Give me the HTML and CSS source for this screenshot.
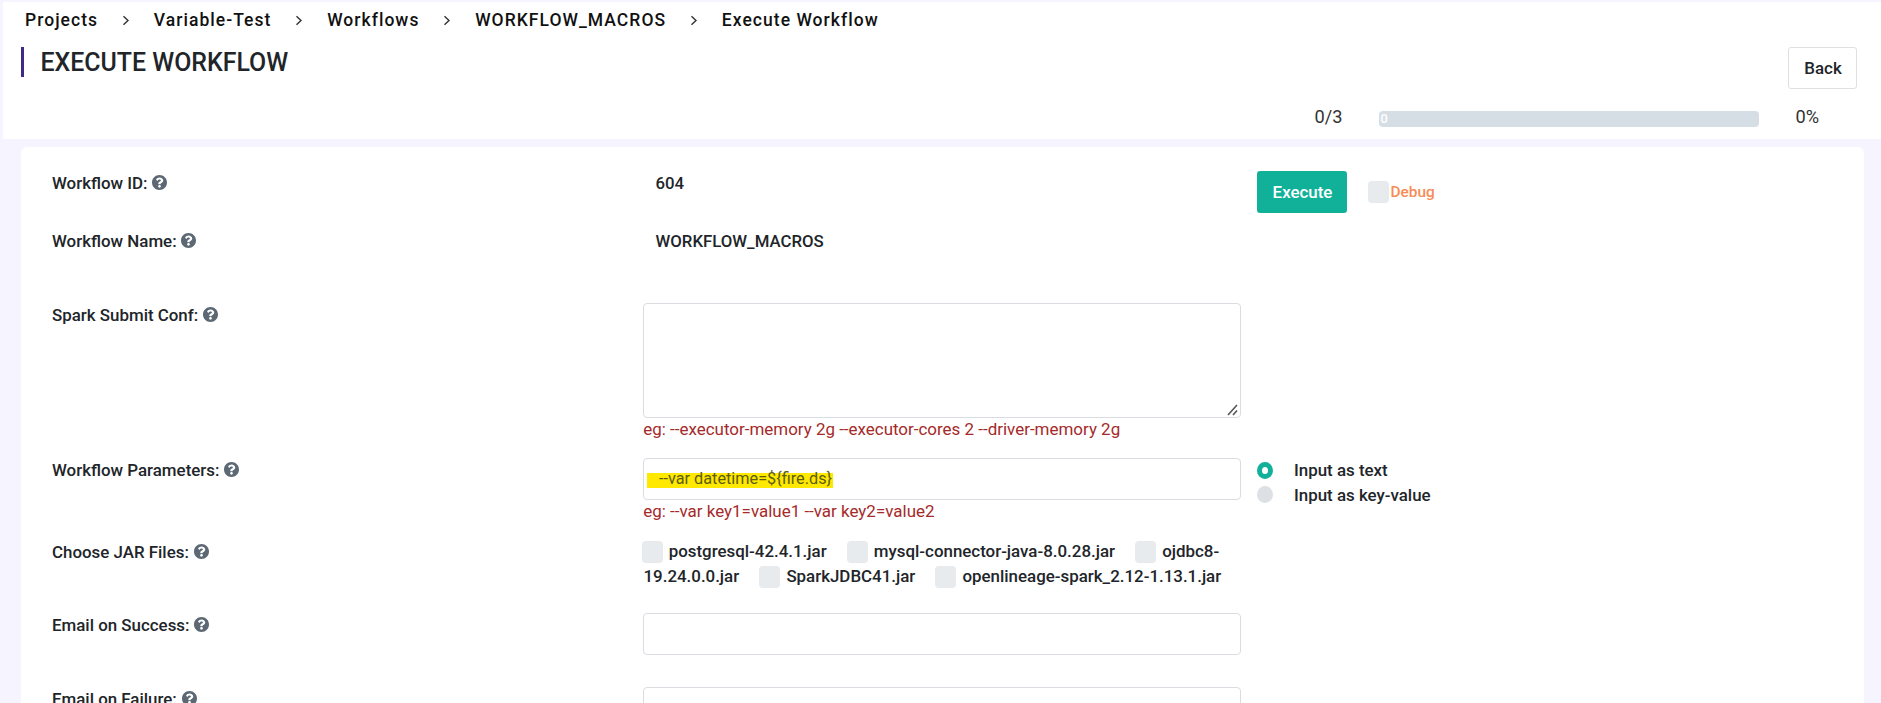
FILE: index.html
```html
<!DOCTYPE html>
<html lang="en">
<head>
<meta charset="utf-8">
<title>Execute Workflow</title>
<link rel="stylesheet" href="styles.css">
</head>
<body>
<svg class="sprite" aria-hidden="true">
  <symbol id="help" viewBox="8 8 496 496"><path d="M504 256c0 136.997-111.043 248-248 248S8 392.997 8 256C8 119.083 119.043 8 256 8s248 111.083 248 248zM262.655 90c-54.497 0-89.255 22.957-116.549 63.758-3.536 5.286-2.353 12.415 2.715 16.258l34.699 26.31c5.205 3.947 12.621 3.008 16.665-2.122 17.864-22.658 30.113-35.797 57.303-35.797 20.429 0 45.698 13.148 45.698 32.958 0 14.976-12.363 22.667-32.534 33.976C247.128 238.528 216 254.941 216 296v4c0 6.627 5.373 12 12 12h56c6.627 0 12-5.373 12-12v-1.333c0-28.462 83.186-29.647 83.186-106.667 0-58.002-60.165-102-116.531-102zM256 338c-25.365 0-46 20.635-46 46 0 25.364 20.635 46 46 46s46-20.636 46-46c0-25.365-20.635-46-46-46z"/></symbol>
  <symbol id="chevron" viewBox="0 0 8 11"><path d="M1.5 1.2 6 5.5 1.5 9.8" fill="none" stroke="#333" stroke-width="1.4"/></symbol>
</svg>
<header class="header">
  <nav class="breadcrumb">
    <a>Projects</a><svg><use href="#chevron"/></svg><a>Variable-Test</a><svg><use href="#chevron"/></svg><a>Workflows</a><svg><use href="#chevron"/></svg><a>WORKFLOW_MACROS</a><svg><use href="#chevron"/></svg><a>Execute Workflow</a>
  </nav>
  <div class="title-row">
    <h1 class="title">EXECUTE WORKFLOW</h1>
    <button class="btn btn-back">Back</button>
  </div>
  <div class="progress-row">
    <span class="count">0/3</span>
    <div class="progress">0</div>
    <span class="percent">0%</span>
  </div>
</header>
<main class="card">
  <div class="row row-id">
    <label class="label">Workflow ID:<svg><use href="#help"/></svg></label>
    <div class="value">604</div>
    <div class="actions">
      <button class="btn btn-execute">Execute</button>
      <label class="debug"><i class="check"></i>Debug</label>
    </div>
  </div>
  <div class="row row-name">
    <label class="label">Workflow Name:<svg><use href="#help"/></svg></label>
    <div class="value">WORKFLOW_MACROS</div>
  </div>
  <div class="row row-conf">
    <label class="label">Spark Submit Conf:<svg><use href="#help"/></svg></label>
    <div class="field">
      <div class="control area"><svg class="grip" viewBox="0 0 11 12"><path d="M1 11 10 1M6 11 10 6.5" fill="none" stroke="#555" stroke-width="1.6"/></svg></div>
      <p class="hint">eg: --executor-memory 2g --executor-cores 2 --driver-memory 2g</p>
    </div>
  </div>
  <div class="row row-params">
    <label class="label">Workflow Parameters:<svg><use href="#help"/></svg></label>
    <div class="field">
      <div class="control"><span class="marked">--var datetime=${fire.ds}</span></div>
      <p class="hint">eg: --var key1=value1 --var key2=value2</p>
    </div>
    <div class="modes">
      <label class="mode"><i class="radio radio-on"></i>Input as text</label>
      <label class="mode"><i class="radio"></i>Input as key-value</label>
    </div>
  </div>
  <div class="row row-jars">
    <label class="label">Choose JAR Files:<svg><use href="#help"/></svg></label>
    <div class="jars"><span class="jar"><i class="check"></i>postgresql-42.4.1.jar</span><span class="jar"><i class="check"></i>mysql-connector-java-8.0.28.jar</span><span class="jar"><i class="check"></i>ojdbc8-<wbr>19.24.0.0.jar</span><span class="jar"><i class="check"></i>SparkJDBC41.jar</span><span class="jar"><i class="check"></i>openlineage-spark_2.12-1.13.1.jar</span></div>
  </div>
  <div class="row row-success">
    <label class="label">Email on Success:<svg><use href="#help"/></svg></label>
    <div class="control"></div>
  </div>
  <div class="row">
    <label class="label">Email on Failure:<svg><use href="#help"/></svg></label>
    <div class="control"></div>
  </div>
</main>
</body>
</html>
```
FILE: styles.css
```css
* { box-sizing: border-box; }
html, body { height: 100%; }
body {
  margin: 0;
  padding: 2px 0 0 3px;
  overflow: hidden;
  background: #f5f4ff;
  color: #212529;
  font: 500 16.9px/25px Roboto, sans-serif;
}
.sprite { display: none; }

.header { height: 137px; background: #fff; }
.breadcrumb {
  display: flex;
  align-items: center;
  height: 37px;
  padding-left: 22px;
  color: #111;
  font-size: 17.5px;
  letter-spacing: 1.04px;
}
.breadcrumb svg { width: 8px; height: 11px; margin: 0 24px 0 23.7px; }

.title-row { display: flex; justify-content: space-between; height: 60px; padding: 8px 24px 0 18px; }
.title {
  height: 30px;
  margin: 0;
  padding-left: 16.5px;
  border-left: 3px solid #412a86;
  font-size: 24.9px;
  font-weight: 500;
  line-height: 31px;
}
.btn { padding: 0; border-radius: 3px; font: inherit; }
.btn-back { width: 69px; height: 42px; padding-left: 1px; border: 1px solid #dee1e4; background: #fff; color: #212529; }

.progress-row { display: flex; align-items: center; height: 40px; padding-left: 1311.5px; font-size: 18.2px; font-weight: 400; color: #333; }
.count { width: 64px; margin-top: -5px; }
.progress {
  width: 380.5px;
  height: 16px;
  padding-left: 2px;
  border-radius: 4px;
  background: #d6dee5;
  color: #fff;
  font-size: 12.7px;
  font-weight: 500;
  line-height: 16px;
}
.percent { margin: -5px 0 0 36.5px; }

.card {
  height: 556px;
  margin: 8px 17.5px 0 18px;
  padding: 24px 0 0 31px;
  border-radius: 6px 6px 0 0;
  background: #fff;
}
.row { display: grid; grid-template-columns: 591px 597.5px 1fr; align-items: start; }
.row-id { height: 58px; }
.row-name { height: 74px; }
.row-conf { height: 155px; }
.row-params { height: 82px; }
.row-jars { height: 73px; }
.row-success { height: 74px; }

.label { display: flex; align-items: center; }
.label svg { width: 15px; height: 15px; margin: -2px 0 0 4.8px; fill: #5c6873; }
.value { padding-left: 12.5px; font-size: 16.8px; }

.actions { display: flex; align-items: center; padding-left: 16.5px; }
.btn-execute { width: 90px; height: 42px; padding-left: 1px; border: 0; background: #11b199; color: #fff; }
.debug { display: flex; align-items: center; margin-left: 21px; padding-top: 1px; color: #f98b55; font-size: 15.4px; }
.debug .check { margin: -1px 1.5px 0 0; }
.check { display: inline-block; width: 21px; height: 22px; border-radius: 4px; background: #e7ebee; }

.control { display: flex; height: 42px; padding: 14px 0 0 3px; border: 1px solid #d9dde2; border-radius: 4px; background: #fff; }
.area { height: 115px; padding: 0 2px 1px 0; align-items: flex-end; justify-content: flex-end; }
.grip { width: 11px; height: 12px; }
.hint { margin: -1px 0 0 .3px; color: #a52a2a; font-size: 16.97px; font-weight: 400; }
.marked { height: 15px; padding: 0 1px 0 12px; background: #ffe900; color: #5c5c12; font-size: 16.25px; font-weight: 400; line-height: 12px; }

.modes { padding-left: 16.5px; }
.mode { display: flex; align-items: center; line-height: 24.5px; }
.radio { width: 16px; height: 17px; margin-right: 21px; border-radius: 50%; background: #dde0e4; }
.radio-on { border: 5px solid #11b199; background: #fff; }

.jars { margin: -1px 0 0 .5px; line-height: 24.6px; }
.jar { margin-right: 20px; }
.jar:last-child { margin-right: 0; }
.jars .check { margin: -5px 6.2px -4px 0; vertical-align: middle; }
.jar:first-child .check { margin-left: -2px; }
```
